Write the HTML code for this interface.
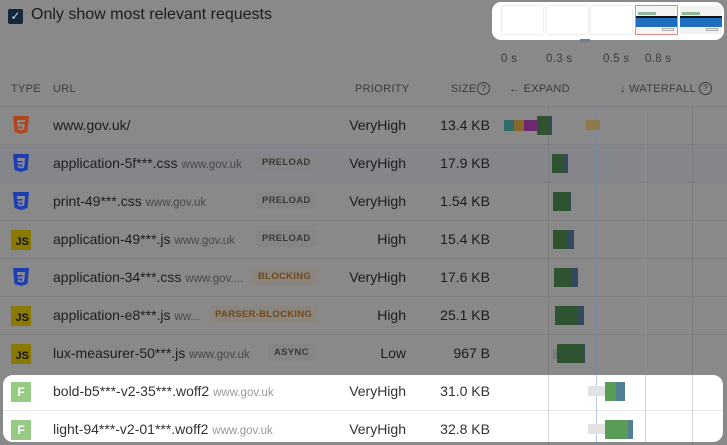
<!DOCTYPE html>
<html><head><meta charset="utf-8"><style>
*{margin:0;padding:0;box-sizing:border-box}
body{width:727px;height:445px;background:#898989;font-family:"Liberation Sans",sans-serif;position:relative;overflow:hidden;color:#1c1c1c}
.a{position:absolute}
.hdr{font-size:11px;color:#3c3c3c;letter-spacing:.3px}
.url{font-size:14px;color:#1e1e1e;white-space:nowrap}
.dom{font-size:11.5px;color:#484848}
.tag{position:absolute;font-size:9.5px;font-weight:bold;padding:3px 6px;border-radius:3px;background:#858585;color:#3a3a3a;letter-spacing:.3px}
.pr{position:absolute;right:321px;font-size:14px}
.sz{position:absolute;right:237px;font-size:14px}
.line{position:absolute;left:0;width:727px;height:1px;background:#7f7f7f}
.b{position:absolute}
.js{position:absolute;left:11px;width:20px;height:20px;background:#8a7a05;color:#111;font-size:11px;font-weight:bold;text-align:right;padding:6px 2px 0 0;line-height:12px}
</style></head><body>
<!-- checkbox -->
<div class="a" style="left:8px;top:9px;width:15px;height:15px;background:#14273c;border-radius:2px;color:#cfd6dd;font-size:12px;line-height:15px;text-align:center">✓</div>
<div class="a" style="left:31px;top:6px;font-size:16px;color:#1c1c1c">Only show most relevant requests</div>
<!-- filmstrip -->
<div class="a" style="left:492px;top:2px;width:232px;height:38px;background:#fff;border-radius:9px"></div>
<div class="a" style="left:502px;top:6px;width:41px;height:28px;background:#fff;box-shadow:0 0 2px #ccc"></div>
<div class="a" style="left:547px;top:6px;width:41px;height:28px;background:#fff;box-shadow:0 0 2px #ccc"></div>
<div class="a" style="left:591px;top:6px;width:41px;height:28px;background:#fff;box-shadow:0 0 2px #ccc"></div>
<div class="a" style="left:635px;top:5px;width:43px;height:30px;border:1px solid #e08a8a;background:#f4f4f4">
 <div class="a" style="left:2px;top:6px;width:18px;height:3px;background:#8fb89b"></div>
 <div class="a" style="left:0;top:10px;width:41px;height:2px;background:#111"></div>
 <div class="a" style="left:0;top:12px;width:41px;height:9px;background:#1f6fc0"></div>
 <div class="a" style="left:26px;top:22px;width:12px;height:3px;border:1px solid #aaa"></div>
</div>
<div class="a" style="left:680px;top:6px;width:42px;height:28px;background:#f2f2f2">
 <div class="a" style="left:2px;top:6px;width:18px;height:3px;background:#8fb89b"></div>
 <div class="a" style="left:0;top:10px;width:42px;height:2px;background:#111"></div>
 <div class="a" style="left:0;top:12px;width:42px;height:9px;background:#1f6fc0"></div>
 <div class="a" style="left:26px;top:22px;width:12px;height:3px;border:1px solid #aaa"></div>
</div>
<div class="a" style="left:580px;top:39px;width:10px;height:3px;background:#6f7f8f"></div>
<!-- time labels -->
<div class="a hdr" style="left:501px;top:53px;font-size:11.5px">0 s</div>
<div class="a hdr" style="left:546px;top:53px;font-size:11.5px">0.3 s</div>
<div class="a hdr" style="left:603px;top:53px;font-size:11.5px">0.5 s</div>
<div class="a hdr" style="left:645px;top:53px;font-size:11.5px">0.8 s</div>
<!-- header -->
<div class="a hdr" style="left:11px;top:83px">TYPE</div>
<div class="a hdr" style="left:53px;top:83px">URL</div>
<div class="a hdr" style="left:355px;top:83px">PRIORITY</div>
<div class="a hdr" style="left:451px;top:83px">SIZE</div>
<div class="a" style="left:477px;top:82px;width:13px;height:13px;border:1.3px solid #3c3c3c;border-radius:50%;font-size:9px;text-align:center;line-height:11px;color:#3c3c3c">?</div>
<div class="a hdr" style="left:509px;top:83px">← EXPAND</div>
<div class="a hdr" style="left:620px;top:83px">↓ WATERFALL</div>
<div class="a" style="left:699px;top:82px;width:13px;height:13px;border:1.3px solid #3c3c3c;border-radius:50%;font-size:9px;text-align:center;line-height:11px;color:#3c3c3c">?</div>
<div class="line" style="top:106px"></div>
<!-- row 2 tint -->
<div class="a" style="left:0;top:145px;width:727px;height:38px;background:#85868c"></div>
<div class="line" style="top:144px"></div><div class="line" style="top:182px"></div><div class="line" style="top:220px"></div><div class="line" style="top:258px"></div><div class="line" style="top:296px"></div><div class="line" style="top:334px"></div>
<!-- highlight panel -->
<div class="a" style="left:3px;top:375px;width:720px;height:67px;background:#fff;border-radius:10px"></div>
<div class="a" style="left:3px;top:410px;width:720px;height:1px;background:#e6e6e6"></div>
<!-- grid lines waterfall -->
<div class="a" style="left:548px;top:107px;width:1px;height:338px;background:rgba(100,100,100,.25)"></div>
<div class="a" style="left:692px;top:107px;width:1px;height:338px;background:rgba(100,100,100,.25)"></div>
<div class="a" style="left:596px;top:107px;width:1px;height:338px;background:#7a88a8"></div>
<div class="a" style="left:645px;top:107px;width:1px;height:338px;background:#a08a80"></div>
<div class="a" style="left:596px;top:375px;width:1px;height:67px;background:#b9c9ea"></div>
<div class="a" style="left:645px;top:375px;width:1px;height:67px;background:#f3c9bd"></div>
<!-- icons -->
<svg class="a" style="left:13px;top:116px" width="16" height="18" viewBox="0 0 16 18"><path d="M0 0h16l-1.5 16L8 18l-6.5-2z" fill="#b2461c"/><path d="M4 4h8l-.2 2H6.2l.2 2h5.2l-.5 5.5L8 14.5l-3-1-.2-2h2l.1 1 1.1.4 1.1-.4.1-2H4.6z" fill="#8a8a8a"/></svg>
<svg class="a" style="left:13px;top:154px" width="16" height="18" viewBox="0 0 16 18"><path d="M0 0h16l-1.5 16L8 18l-6.5-2z" fill="#1c3eb0"/><path d="M4 4h8l-.5 6.5-.5 3L8 14.5l-3-1-.2-2h2l.1 1 1.1.4 1.1-.4.2-2H4.7l-.2-2h5l.1-1.5H4.2z" fill="#8a8a9a"/></svg>
<svg class="a" style="left:13px;top:192px" width="16" height="18" viewBox="0 0 16 18"><path d="M0 0h16l-1.5 16L8 18l-6.5-2z" fill="#1c3eb0"/><path d="M4 4h8l-.5 6.5-.5 3L8 14.5l-3-1-.2-2h2l.1 1 1.1.4 1.1-.4.2-2H4.7l-.2-2h5l.1-1.5H4.2z" fill="#8a8a9a"/></svg>
<div class="js" style="top:230px">JS</div>
<svg class="a" style="left:13px;top:268px" width="16" height="18" viewBox="0 0 16 18"><path d="M0 0h16l-1.5 16L8 18l-6.5-2z" fill="#1c3eb0"/><path d="M4 4h8l-.5 6.5-.5 3L8 14.5l-3-1-.2-2h2l.1 1 1.1.4 1.1-.4.2-2H4.7l-.2-2h5l.1-1.5H4.2z" fill="#8a8a9a"/></svg>
<div class="js" style="top:306px">JS</div>
<div class="js" style="top:344px">JS</div>
<div class="a" style="left:11px;top:382px;width:20px;height:20px;background:#97cb84;color:#fff;font-size:12px;font-weight:bold;text-align:center;line-height:20px">F</div>
<div class="a" style="left:11px;top:420px;width:20px;height:20px;background:#97cb84;color:#fff;font-size:12px;font-weight:bold;text-align:center;line-height:20px">F</div>
<!-- URLs -->
<div class="a url" style="left:53px;top:117px">www.gov.uk/</div>
<div class="a url" style="left:53px;top:155px">application-5f***.css <span class="dom">www.gov.uk</span></div>
<div class="a url" style="left:53px;top:193px">print-49***.css <span class="dom">www.gov.uk</span></div>
<div class="a url" style="left:53px;top:231px">application-49***.js <span class="dom">www.gov.uk</span></div>
<div class="a url" style="left:53px;top:269px">application-34***.css <span class="dom">www.gov....</span></div>
<div class="a url" style="left:53px;top:307px">application-e8***.js <span class="dom">ww...</span></div>
<div class="a url" style="left:53px;top:345px">lux-measurer-50***.js <span class="dom">www.gov.uk</span></div>
<div class="a url" style="left:53px;top:383px;color:#333">bold-b5***-v2-35***.woff2 <span class="dom" style="color:#999">www.gov.uk</span></div>
<div class="a url" style="left:53px;top:421px;color:#333">light-94***-v2-01***.woff2 <span class="dom" style="color:#999">www.gov.uk</span></div>
<!-- tags -->
<div class="tag" style="left:256px;top:154px">PRELOAD</div>
<div class="tag" style="left:256px;top:192px">PRELOAD</div>
<div class="tag" style="left:256px;top:230px">PRELOAD</div>
<div class="tag" style="left:252px;top:268px;color:#6e4a14;background:#8b8580">BLOCKING</div>
<div class="tag" style="left:209px;top:306px;color:#6e4a14;background:#8b8580">PARSER-BLOCKING</div>
<div class="tag" style="left:268px;top:344px">ASYNC</div>
<!-- priority -->
<div class="pr" style="top:117px">VeryHigh</div>
<div class="pr" style="top:155px">VeryHigh</div>
<div class="pr" style="top:193px">VeryHigh</div>
<div class="pr" style="top:231px">High</div>
<div class="pr" style="top:269px">VeryHigh</div>
<div class="pr" style="top:307px">High</div>
<div class="pr" style="top:345px">Low</div>
<div class="pr" style="top:383px;color:#333">VeryHigh</div>
<div class="pr" style="top:421px;color:#333">VeryHigh</div>
<!-- size -->
<div class="sz" style="top:117px">13.4 KB</div>
<div class="sz" style="top:155px">17.9 KB</div>
<div class="sz" style="top:193px">1.54 KB</div>
<div class="sz" style="top:231px">15.4 KB</div>
<div class="sz" style="top:269px">17.6 KB</div>
<div class="sz" style="top:307px">25.1 KB</div>
<div class="sz" style="top:345px">967 B</div>
<div class="sz" style="top:383px;color:#333">31.0 KB</div>
<div class="sz" style="top:421px;color:#333">32.8 KB</div>
<!-- bars -->
<div class="b" style="left:504px;top:120px;width:10px;height:11px;background:#2d6e68"></div>
<div class="b" style="left:514px;top:120px;width:10px;height:11px;background:#8a6a2c"></div>
<div class="b" style="left:524px;top:120px;width:13px;height:11px;background:#6e2a70"></div>
<div class="b" style="left:537px;top:116px;width:12px;height:19px;background:#2f5230"></div>
<div class="b" style="left:549px;top:116px;width:3px;height:19px;background:#344a5c"></div>
<div class="b" style="left:586px;top:120px;width:14px;height:10px;background:#8f7a4c"></div>
<div class="b" style="left:552px;top:154px;width:11px;height:19px;background:#2f5230"></div>
<div class="b" style="left:563px;top:154px;width:5px;height:19px;background:#344a5c"></div>
<div class="b" style="left:553px;top:192px;width:16px;height:19px;background:#2f5230"></div>
<div class="b" style="left:569px;top:192px;width:2px;height:19px;background:#344a5c"></div>
<div class="b" style="left:553px;top:230px;width:15px;height:19px;background:#2f5230"></div>
<div class="b" style="left:568px;top:230px;width:6px;height:19px;background:#344a5c"></div>
<div class="b" style="left:554px;top:268px;width:17px;height:19px;background:#2f5230"></div>
<div class="b" style="left:571px;top:268px;width:7px;height:19px;background:#344a5c"></div>
<div class="b" style="left:555px;top:306px;width:22px;height:19px;background:#2f5230"></div>
<div class="b" style="left:577px;top:306px;width:7px;height:19px;background:#344a5c"></div>
<div class="b" style="left:553px;top:349px;width:4px;height:10px;background:#7c7c7c"></div>
<div class="b" style="left:557px;top:344px;width:26px;height:19px;background:#2f5230"></div>
<div class="b" style="left:583px;top:344px;width:2px;height:19px;background:#344a5c"></div>
<div class="b" style="left:588px;top:386px;width:17px;height:10px;background:#e2e2e2"></div>
<div class="b" style="left:605px;top:382px;width:11px;height:19px;background:#5b9b58"></div>
<div class="b" style="left:616px;top:382px;width:9px;height:19px;background:#517f94"></div>
<div class="b" style="left:588px;top:424px;width:17px;height:10px;background:#e2e2e2"></div>
<div class="b" style="left:605px;top:420px;width:23px;height:19px;background:#5b9b58"></div>
<div class="b" style="left:628px;top:420px;width:5px;height:19px;background:#517f94"></div>
</body></html>
